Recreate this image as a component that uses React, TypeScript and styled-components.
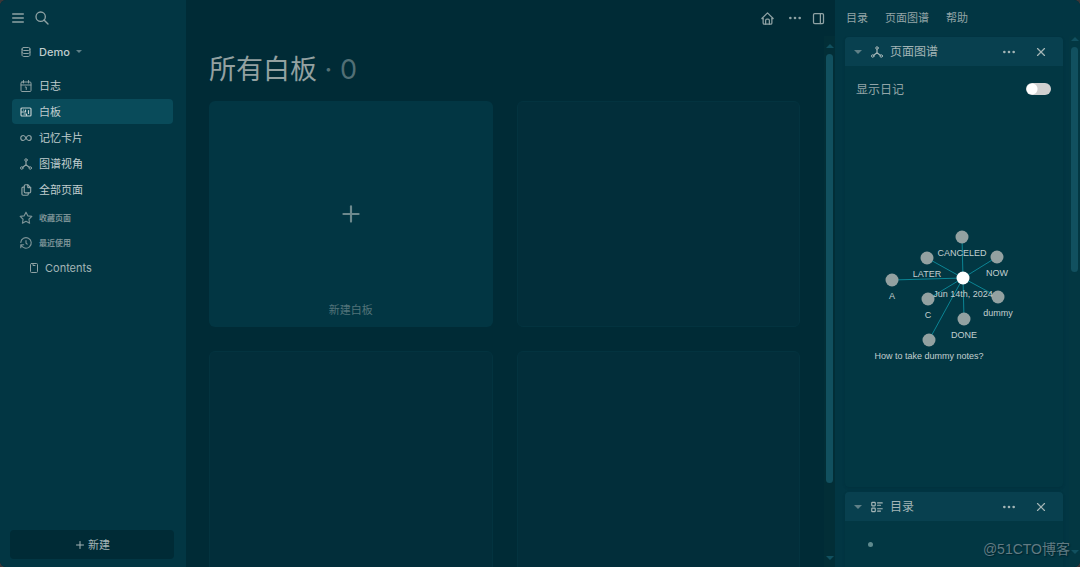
import React from "react";
import styled, { createGlobalStyle } from "styled-components";
import {
  TbDots,
  TbFiles,
  TbHistory,
  TbHome,
  TbLayoutSidebarRight,
  TbListDetails,
  TbMenu2,
  TbPlus,
  TbSearch,
  TbStar,
  TbX,
} from "react-icons/tb";

const GlobalStyle = createGlobalStyle`
  * { box-sizing: border-box; }
  body {
    margin: 0;
    background: #3a3637;
    font-family: Inter, "Noto Sans CJK SC", sans-serif;
    font-size: 11px;
    line-height: 16px;
    color: #a4b5b6;
  }
  button {
    font: inherit;
    color: inherit;
    background: none;
    border: 0;
    padding: 0;
  }
  h1, h2, ul { margin: 0; padding: 0; font-weight: 400; }
  ul { list-style: none; }
  a { color: inherit; text-decoration: none; }
  svg { display: block; flex: none; }
`;

const Window = styled.div`
  display: grid;
  grid-template-columns: 186px minmax(0, 1fr) 245px;
  height: 100vh;
  background: #002b36;
  border-radius: 6px;
  overflow: hidden;
`;

/* ---------- icons ---------- */

const Glyph = ({ children }: { children: React.ReactNode }) => (
  <svg
    width="14"
    height="14"
    viewBox="-2 -2 28 28"
    fill="none"
    stroke="currentColor"
    strokeWidth="2"
    strokeLinecap="round"
    strokeLinejoin="round"
    aria-hidden="true"
  >
    {children}
  </svg>
);

const DatabaseIcon = () => (
  <Glyph>
    <rect x="4" y="3" width="16" height="6" rx="3" />
    <path d="M4 6v12c0 2 2 3 4 3h8c2 0 4-1 4-3V6M4 12c0 2 2 3 4 3h8c2 0 4-1 4-3" />
  </Glyph>
);

const CalendarIcon = () => (
  <Glyph>
    <rect x="2" y="4" width="20" height="19" rx="2" />
    <path d="M7 1v5M17 1v5M2 10h20M10.500 14h2v5" />
  </Glyph>
);

const WhiteboardIcon = () => (
  <Glyph>
    <rect strokeWidth="2.400" x="2" y="4" width="20" height="16" rx="2" />
    <path strokeWidth="2.400" d="M3 12h8V8M7 8v0M8 16h5v3M17 9v6" />
  </Glyph>
);

const InfinityIcon = () => (
  <Glyph>
    <path
      strokeWidth="2.400"
      d="M12 12c-1.500-3-3-5-5.500-5a5 5 0 0 0 0 10c2.500 0 4-2 5.500-5zM12 12c1.500 3 3 5 5.500 5a5 5 0 0 0 0-10c-2.500 0-4 2-5.500 5z"
    />
  </Glyph>
);

const GraphIcon = () => (
  <Glyph>
    <circle cx="12" cy="4" r="2.500" />
    <circle cx="3.500" cy="20" r="2.500" />
    <circle cx="20.500" cy="20" r="2.500" />
    <path strokeWidth="2.400" d="M12 6.500v7M5.500 18.500l6.500-5 6.500 5" />
  </Glyph>
);

const PageIcon = () => (
  <Glyph>
    <rect x="5" y="3" width="14" height="18" rx="2" />
    <path d="M10 3v4h4" />
  </Glyph>
);

const Caret = styled.span<{ $size?: number; $up?: boolean; $color?: string }>`
  flex: none;
  border-left: ${(p) => p.$size ?? 4}px solid transparent;
  border-right: ${(p) => p.$size ?? 4}px solid transparent;
  border-top: ${(p) => (p.$up ? 0 : p.$size ?? 4)}px solid ${(p) => p.$color ?? "#5f8087"};
  border-bottom: ${(p) => (p.$up ? p.$size ?? 4 : 0)}px solid ${(p) => p.$color ?? "#5f8087"};
`;

/* ---------- left sidebar ---------- */

const Sidebar = styled.aside`
  display: flex;
  flex-direction: column;
  background: #023643;
`;

const Toolbar = styled.div<{ $end?: boolean }>`
  display: flex;
  flex: none;
  align-items: center;
  justify-content: ${(p) => (p.$end ? "flex-end" : "flex-start")};
  gap: 8px;
  height: 36px;
  padding: 0 9px 0 10px;
  color: #8fa2a4;
`;

const IconButton = styled.button`
  display: grid;
  place-items: center;
`;

const GraphSwitcher = styled.button`
  display: flex;
  align-items: center;
  gap: 6px;
  height: 25px;
  margin: 3px 12px 9px;
  padding: 0 7px;
  color: #c0cdce;
  font-weight: 500;

  svg { color: #8fa2a4; }
`;

const NavList = styled.ul`
  display: flex;
  flex-direction: column;
  gap: 1px;
  padding: 0 13px 0 12px;
`;

const NavLink = styled.a<{ $active?: boolean; $nested?: boolean }>`
  display: flex;
  align-items: center;
  gap: ${(p) => (p.$nested ? 4 : 6)}px;
  height: 25px;
  padding: 0 ${(p) => (p.$nested ? 15 : 7)}px;
  border-radius: 4px;
  color: ${(p) => (p.$nested ? "#a4b5b6" : "#c0cdce")};
  background: ${(p) => (p.$active ? "#094b5a" : "transparent")};

  svg { color: ${(p) => (p.$active ? "#c0cdce" : "#8fa2a4")}; }
`;

const Sections = styled.div`
  display: flex;
  flex-direction: column;
  padding: 3px 12px 0;
`;

const SectionTitle = styled.h2`
  display: flex;
  align-items: center;
  gap: 6px;
  height: 25px;
  padding: 0 7px;
  font-size: 8px;
  font-weight: 700;
  color: #7b9296;
`;

const CreateButton = styled.button`
  display: flex;
  align-items: center;
  justify-content: center;
  gap: 2px;
  height: 29px;
  margin: auto 12px 8px 10px;
  border-radius: 4px;
  background: #002b36;
`;

/* ---------- main area ---------- */

const Main = styled.main`
  display: flex;
  flex-direction: column;
  min-width: 0;
  min-height: 0;
`;

const MoreSlot = styled.div`
  padding-left: 4px;
`;

const ScrollArea = styled.div`
  display: flex;
  flex: 1;
  min-height: 0;
`;

const Content = styled.div`
  flex: 1;
  min-width: 0;
  overflow: hidden;
  padding: 12px 24px 0 23px;
`;

const Title = styled.h1`
  height: 53px;
  line-height: 44px;
  font-size: 27px;
  color: #93a1a1;
`;

const Count = styled.span`
  color: #526f75;
`;

const Boards = styled.div`
  display: grid;
  grid-template-columns: repeat(2, minmax(0, 1fr));
  grid-auto-rows: 226px;
  gap: 24px;
`;

const EmptyBoard = styled.div`
  border: 1px solid #03333f;
  border-radius: 6px;
  background: #022e3a;
`;

const NewBoard = styled.button`
  display: grid;
  grid-template-rows: 1fr 34px;
  place-items: center;
  padding-top: 34px;
  border-radius: 6px;
  background: #023643;
  color: #527379;

  svg { color: #6d898d; }
`;

const NewBoardLabel = styled.span`
  align-self: start;
  line-height: 34px;
`;

const Track = styled.div<{ $top: number; $bottom: number }>`
  display: flex;
  flex: none;
  flex-direction: column;
  align-items: center;
  width: 11px;
  padding: ${(p) => p.$top}px 0 ${(p) => p.$bottom}px;
  background: rgba(10, 60, 60, 0.16);
`;

const Thumb = styled.div<{ $share: number }>`
  width: 7px;
  flex: ${(p) => p.$share} 1 0;
  margin-top: 6px;
  border-radius: 4px;
  background: #11505f;
`;

const TrackRest = styled.div<{ $share: number }>`
  flex: ${(p) => p.$share} 1 0;
`;

type ScrollbarProps = { top: number; bottom: number; thumb: number; rest: number };

const Scrollbar = ({ top, bottom, thumb, rest }: ScrollbarProps) => (
  <Track $top={top} $bottom={bottom} aria-hidden="true">
    <Caret $up $color="#11505f" />
    <Thumb $share={thumb} />
    <TrackRest $share={rest} />
    <Caret $color="#11505f" />
  </Track>
);

/* ---------- right sidebar ---------- */

const RightSidebar = styled.aside`
  position: relative;
  display: flex;
  flex-direction: column;
  min-height: 0;
  background: #023643;
`;

const Tabs = styled.nav`
  display: flex;
  flex: none;
  align-items: center;
  gap: 17px;
  height: 36px;
  padding: 0 11px;
  color: #93a5a7;
`;

const Panels = styled.div`
  display: flex;
  flex: 1;
  flex-direction: column;
  gap: 5px;
  min-width: 0;
  overflow: hidden;
  padding: 1px 6px 0 10px;
`;

const Panel = styled.section`
  flex: none;
  border-radius: 4px;
  background: #023743;
  box-shadow: 0 1px 3px rgba(0, 30, 40, 0.2);
`;

const PanelHeader = styled.header`
  display: flex;
  align-items: center;
  gap: 6px;
  height: 29px;
  padding: 0 15px 0 9px;
  border-radius: 4px 4px 0 0;
  background: #08404f;
`;

const PanelTitle = styled.h2`
  flex: 1;
  font-size: 12px;
`;

const PanelIcon = styled.span`
  padding-left: 2px;
`;

const PanelActions = styled.div`
  display: flex;
  gap: 17px;
`;

const SettingRow = styled.label`
  display: flex;
  align-items: center;
  justify-content: space-between;
  height: 46px;
  padding: 0 12px 0 11px;
  font-size: 12px;
  line-height: 15px;
  color: #93a5a7;
`;

const Switch = styled.input`
  appearance: none;
  width: 25px;
  height: 12px;
  margin: 0;
  border-radius: 6px;
  background: radial-gradient(circle at 6px 6px, #ffffff 5px, #d0d0d0 6px);
`;

const GraphCanvas = styled.svg`
  width: 100%;
  height: 375px;

  text {
    font-family: "Liberation Sans", sans-serif;
    font-size: 9px;
    fill: #c3cfd0;
    text-anchor: middle;
  }
`;

const Block = styled.div`
  height: 60px;
  padding: 21px 23px;
`;

const Bullet = styled.div`
  width: 5px;
  height: 5px;
  border-radius: 50%;
  background: #5f8a8e;
`;

const Watermark = styled.div`
  position: absolute;
  right: 10px;
  bottom: 8px;
  font: 14px/20px "Liberation Sans", "Noto Sans CJK SC", sans-serif;
  color: #607b83;
  text-shadow: 1px 1px 1px #02242d;
`;

const hub = { x: 118, y: 166 };

const nodes = [
  { name: "CANCELED", x: 117, y: 125 },
  { name: "LATER", x: 82, y: 146 },
  { name: "NOW", x: 152, y: 145 },
  { name: "A", x: 47, y: 168 },
  { name: "C", x: 83, y: 187 },
  { name: "dummy", x: 153, y: 185 },
  { name: "DONE", x: 119, y: 207 },
  { name: "How to take dummy notes?", x: 84, y: 228 },
];

const PageGraph = () => (
  <GraphCanvas viewBox="0 0 218 375" role="img" aria-label="页面图谱">
    {nodes.map((n) => (
      <line key={n.name} x1={hub.x} y1={hub.y} x2={n.x} y2={n.y} stroke="#0b8494" />
    ))}
    {nodes.map((n) => (
      <circle key={n.name} cx={n.x} cy={n.y} r="6.500" fill="#93a1a1" />
    ))}
    <circle cx={hub.x} cy={hub.y} r="6.500" fill="#ffffff" />
    {nodes.map((n) => (
      <text key={n.name} x={n.x} y={n.y + 19}>{n.name}</text>
    ))}
    <text x={hub.x} y={hub.y + 19}>Jun 14th, 2024</text>
  </GraphCanvas>
);

const PanelTop = ({ title, icon }: { title: string; icon: React.ReactNode }) => (
  <PanelHeader>
    <IconButton aria-label={`折叠 ${title}`}><Caret /></IconButton>
    <PanelIcon>{icon}</PanelIcon>
    <PanelTitle>{title}</PanelTitle>
    <PanelActions>
      <IconButton aria-label="更多"><TbDots size={16} /></IconButton>
      <IconButton aria-label="关闭"><TbX size={14} /></IconButton>
    </PanelActions>
  </PanelHeader>
);

const navItems = [
  { label: "日志", icon: <CalendarIcon /> },
  { label: "白板", icon: <WhiteboardIcon />, active: true },
  { label: "记忆卡片", icon: <InfinityIcon /> },
  { label: "图谱视角", icon: <GraphIcon /> },
  { label: "全部页面", icon: <TbFiles size={14} /> },
];

export default function App() {
  return (
    <>
      <GlobalStyle />
      <Window>
        <Sidebar>
          <Toolbar>
            <IconButton aria-label="菜单"><TbMenu2 size={16} /></IconButton>
            <IconButton aria-label="搜索"><TbSearch size={16} /></IconButton>
          </Toolbar>
          <GraphSwitcher>
            <DatabaseIcon />
            Demo
            <Caret $size={3} />
          </GraphSwitcher>
          <nav>
            <NavList>
              {navItems.map((item) => (
                <li key={item.label}>
                  <NavLink href="#" $active={item.active}>{item.icon}{item.label}</NavLink>
                </li>
              ))}
            </NavList>
          </nav>
          <Sections>
            <SectionTitle><TbStar size={14} />收藏页面</SectionTitle>
            <SectionTitle><TbHistory size={14} />最近使用</SectionTitle>
            <NavLink href="#" $nested><PageIcon />Contents</NavLink>
          </Sections>
          <CreateButton><TbPlus size={12} />新建</CreateButton>
        </Sidebar>

        <Main>
          <Toolbar $end>
            <IconButton aria-label="主页"><TbHome size={15} /></IconButton>
            <MoreSlot>
              <IconButton aria-label="更多"><TbDots size={16} /></IconButton>
            </MoreSlot>
            <IconButton aria-label="右侧栏"><TbLayoutSidebarRight size={15} /></IconButton>
          </Toolbar>
          <ScrollArea>
            <Content>
              <Title>所有白板<Count> · 0</Count></Title>
              <Boards>
                <NewBoard>
                  <TbPlus size={26} />
                  <NewBoardLabel>新建白板</NewBoardLabel>
                </NewBoard>
                <EmptyBoard />
                <EmptyBoard />
                <EmptyBoard />
              </Boards>
            </Content>
            <Scrollbar top={8} bottom={7} thumb={429} rest={73} />
          </ScrollArea>
        </Main>

        <RightSidebar>
          <Tabs>
            <a href="#">目录</a>
            <a href="#">页面图谱</a>
            <a href="#">帮助</a>
          </Tabs>
          <ScrollArea>
            <Panels>
              <Panel>
                <PanelTop title="页面图谱" icon={<GraphIcon />} />
                <SettingRow>
                  显示日记
                  <Switch type="checkbox" role="switch" />
                </SettingRow>
                <PageGraph />
              </Panel>
              <Panel>
                <PanelTop title="目录" icon={<TbListDetails size={14} />} />
                <Block><Bullet /></Block>
              </Panel>
            </Panels>
            <Scrollbar top={1} bottom={13} thumb={225} rest={278} />
          </ScrollArea>
          <Watermark>@51CTO博客</Watermark>
        </RightSidebar>
      </Window>
    </>
  );
}
